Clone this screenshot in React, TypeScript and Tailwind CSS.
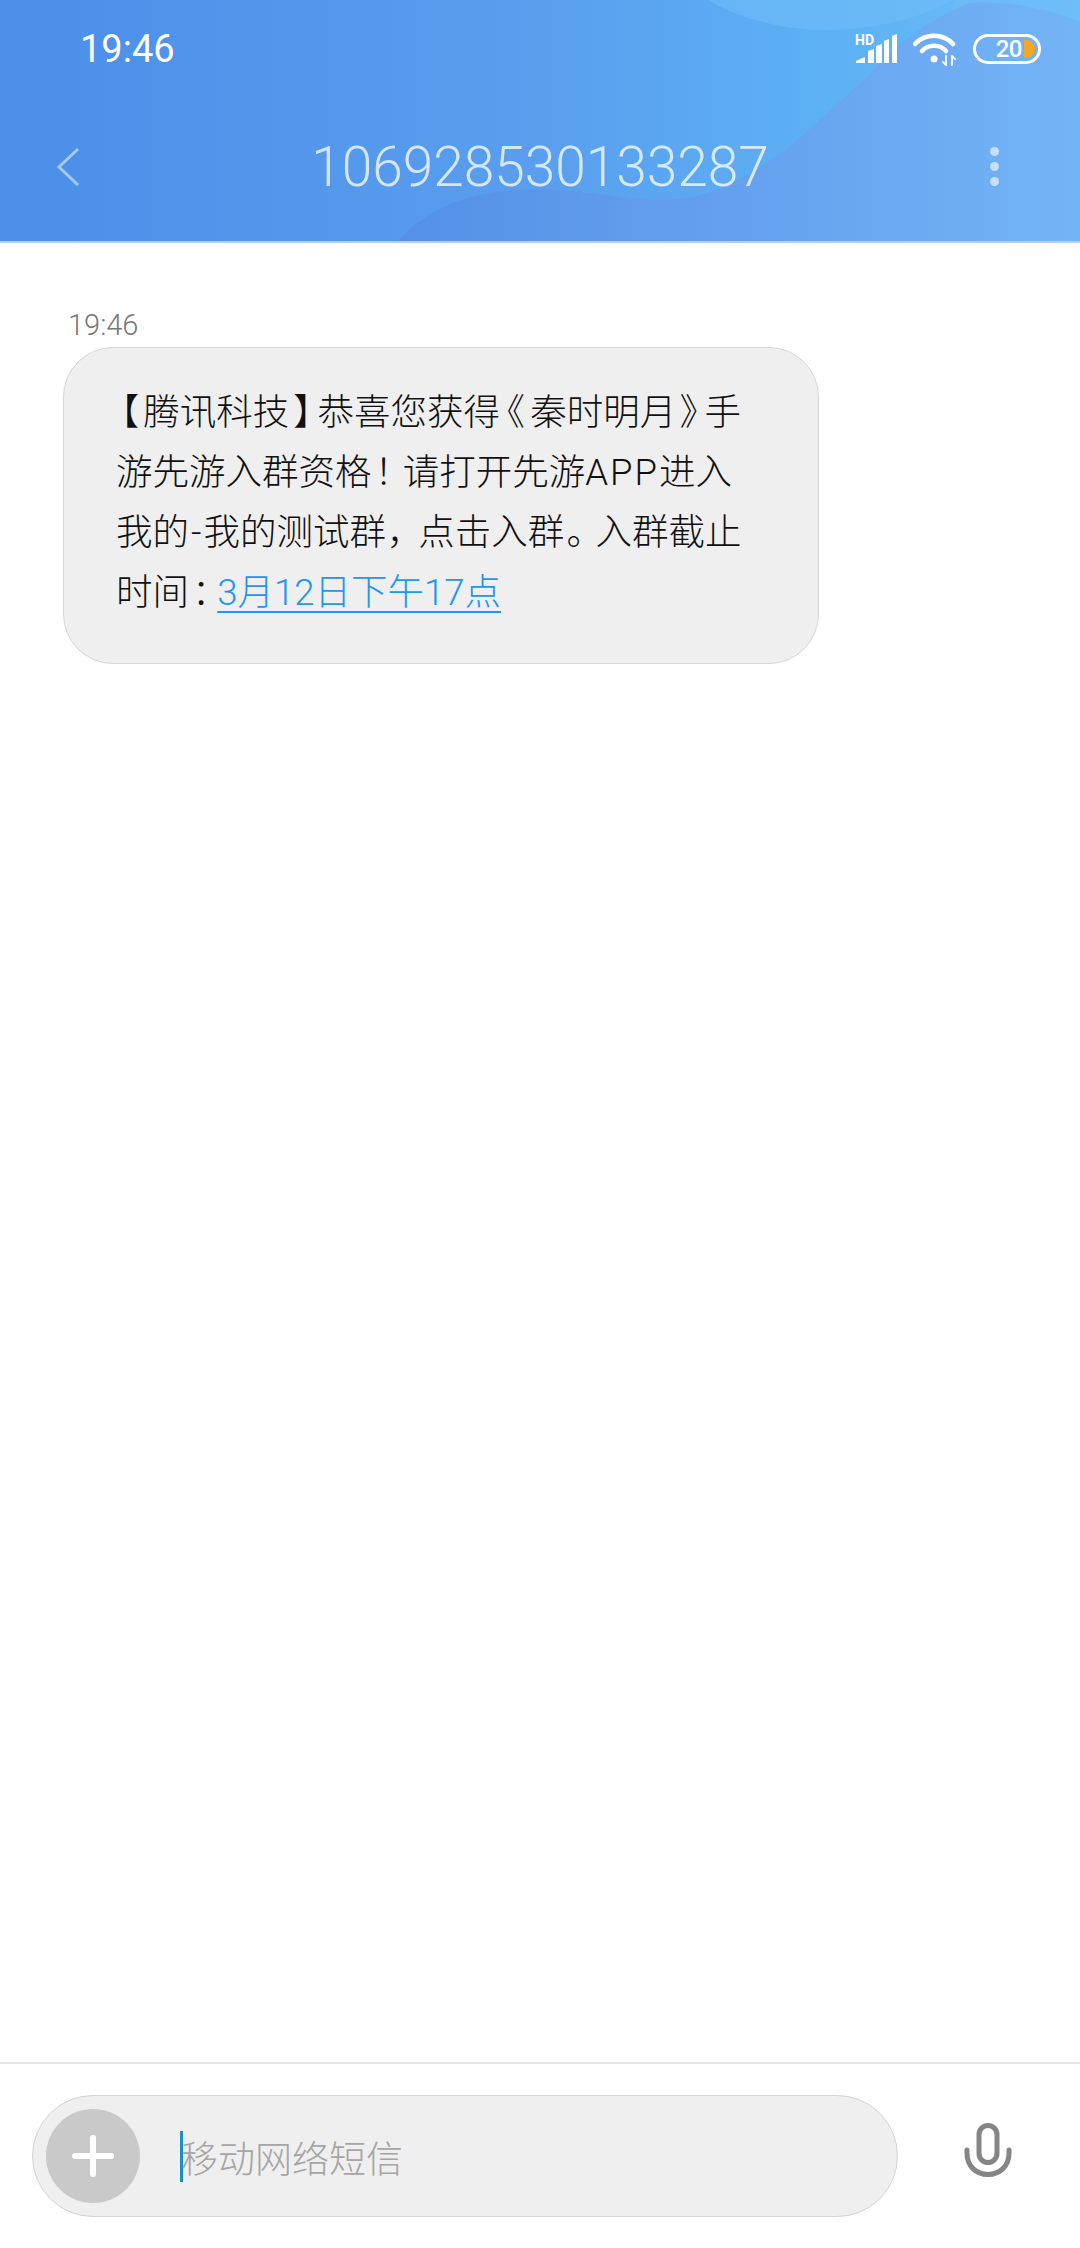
export default function App() {
  const cjk = "font-['Roboto','Noto_Sans_CJK_SC',sans-serif]";
  return (
    <div className={`flex h-[2248px] w-[1080px] flex-col overflow-hidden bg-white ${cjk}`}>
      <header className="relative h-[243px] shrink-0 overflow-hidden bg-[linear-gradient(90deg,#4b8ee9_0%,#5a9eee_50%,#5cb0f4_75%,#6cc0f8_100%)] border-b-2 border-[#b9cff2]">
        <svg className="absolute inset-0" width="1080" height="241" viewBox="0 0 1080 241">
          <defs>
            <linearGradient id="wave" x1="0" y1="0" x2="1" y2="0">
              <stop offset="0" stopColor="#5490e6" />
              <stop offset="0.4" stopColor="#629ded" />
              <stop offset="1" stopColor="#73b4f6" />
            </linearGradient>
          </defs>
          <path d="M709 0 C725 12 770 28 815 30 C860 32 920 20 953 0 Z" fill="#70bdf9" opacity="0.6" />
          <path d="M953 0 L1080 0 L1080 30 L950 30 Z" fill="#70bdf9" opacity="0.6" />
          <path d="M398 241 C430 205 480 185 560 190 C600 194 640 200 660 200 C700 200 733 187 781 153 C810 130 830 110 867 77 C890 50 925 20 970 3 C1000 0 1050 8 1080 22 L1080 241 Z" fill="url(#wave)" />
        </svg>
        <div className="relative flex h-[98px] items-center justify-between pl-[80px] pr-[39px]">
          <span className="text-[38px] leading-none text-white">19:46</span>
          <div className="flex items-center gap-[16px]">
            <div className="relative h-[30px] w-[42px]">
              <span className="absolute left-0 top-[-1px] text-[14px] font-bold leading-[14px] text-white">HD</span>
              <svg width="42" height="30" viewBox="0 0 42 30" fill="white">
                <path d="M1 29 V27 L10 23 V29 Z M13 29 V17 L19 15 V29 Z M21 29 V12 L27 10 V29 Z M29 29 V7 L34 5 V29 Z M37 29 V2 L42 0 V29 Z" />
              </svg>
            </div>
            <svg width="44" height="33" viewBox="0 0 44 33" fill="none" stroke="white" strokeLinecap="round">
              <path d="M2 11 C12 0 30 0 40 11" strokeWidth="4.5" />
              <path d="M9 18 C15 11 27 11 33 18" strokeWidth="4.5" />
              <circle cx="21" cy="26" r="3.5" fill="white" stroke="none" />
              <path d="M33 23 V32 M33 32 L30 29 M39 23 V32 M39 23 L42 26" strokeWidth="1.8" />
            </svg>
            <div className="relative flex h-[30px] w-[68px] items-center justify-end rounded-full border-[3px] border-white pr-[3px]">
              <span className="mr-[2px] text-[24px] font-medium leading-none tracking-[-0.5px] text-white">20</span>
              <span className="h-[18px] w-[11px] rounded-r-full bg-[#f5a623]" />
            </div>
          </div>
        </div>
        <div className="relative flex h-[143px] items-start justify-between pl-[56px] pr-[81px] pt-[49px]">
          <svg width="24" height="40" viewBox="0 0 24 40" fill="none" stroke="#ffffff" strokeOpacity="0.5" strokeWidth="3">
            <path d="M22 2 L3 20 L22 38" />
          </svg>
          <span className="absolute left-0 right-0 top-[32px] text-center text-[55px] font-light leading-[74px] text-white/75">106928530133287</span>
          <div className="flex flex-col gap-[6px]">
            <span className="size-[9px] rounded-full bg-white/60" />
            <span className="size-[9px] rounded-full bg-white/60" />
            <span className="size-[9px] rounded-full bg-white/60" />
          </div>
        </div>
      </header>

      <main className="flex-1 pl-[63px] pt-[64px]">
        <div className="pl-[5px] text-[29px] font-light leading-[36px] text-[#777]">19:46</div>
        <div className="mt-[4px] w-[756px] rounded-[50px] border border-[#d6d6d6] bg-[#efefef] pl-[52px] pt-[35px] pb-[40px]">
          <p className="text-[36.5px] font-light leading-[60px] text-[#111] [font-feature-settings:'palt']">
            <span className="ml-[4px] mr-[5px]">【</span>腾讯科技<span className="ml-[5px] mr-[5px]">】</span>恭喜您获得<span className="ml-[6px] mr-[6px]">《</span>秦时明月<span className="ml-[4px] mr-[6px]">》</span>手<br />
            游先游入群资格<span className="ml-[3px] mr-[10px]">！</span>请打开先游<span className="tracking-[2px]">APP</span>进入<br />
            我的<span className="mx-[2px]">-</span>我的测试群<span className="ml-[3px] mr-[11px]">，</span>点击入群<span className="ml-[2px] mr-[11px]">。</span>入群截止<br />
            时间<span className="ml-[3px] mr-[7px]">：</span><span className="text-[#2196f3] underline underline-offset-[6px] decoration-2">3月12日下午17点</span>
          </p>
        </div>
      </main>

      <footer className="flex h-[186px] shrink-0 items-start border-t-2 border-[#e6e6e6] pl-[32px] pt-[31px]">
        <div className="flex h-[122px] w-[866px] items-center rounded-full border border-[#d4d4d4] bg-[#efefef] pl-[13px]">
          <div className="flex size-[94px] items-center justify-center rounded-full bg-[#c9c9c9]">
            <svg width="42" height="42" viewBox="0 0 42 42" stroke="white" strokeWidth="6" strokeLinecap="round">
              <path d="M21 3 V39 M3 21 H39" />
            </svg>
          </div>
          <span className="ml-[40px] h-[51px] w-[3px] bg-[#1a8fc9]" />
          <span className="ml-[-2px] pt-[8px] text-[37px] font-light leading-none text-[#a5a5a5]">移动网络短信</span>
        </div>
        <svg className="ml-[66px] mt-[28px]" width="48" height="54" viewBox="0 0 48 54" fill="none" stroke="#858585" strokeLinecap="round">
          <rect x="15" y="2.5" width="18" height="37" rx="9" strokeWidth="5" />
          <path d="M3 27 V30 C3 43 12 51.5 24 51.5 C36 51.5 45 43 45 30 V27" strokeWidth="5" />
        </svg>
      </footer>
    </div>
  );
}
